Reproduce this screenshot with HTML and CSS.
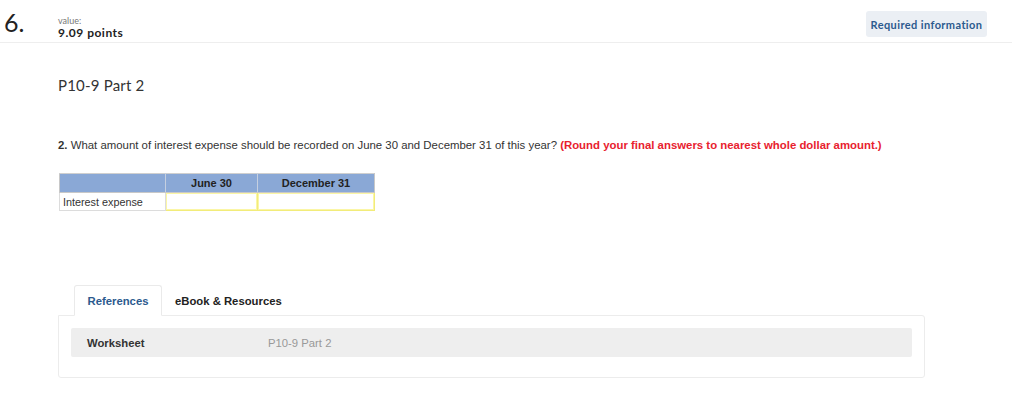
FILE: index.html
```html
<!DOCTYPE html>
<html>
<head>
<meta charset="utf-8">
<link rel="stylesheet" href="styles.css">
</head>
<body>
<div class="header">
  <div class="qnum">6.</div>
  <div class="value">
    <div class="value-label">value:</div>
    <div class="value-points">9.09 points</div>
  </div>
  <div class="req">Required information</div>
</div>
<div class="content">
  <h2 class="title">P10-9 Part 2</h2>
  <p class="question"><b>2.</b> What amount of interest expense should be recorded on June 30 and December 31 of this year? <span class="hint">(Round your final answers to nearest whole dollar amount.)</span></p>
  <table class="grid">
    <tr class="head">
      <th class="c1"></th>
      <th class="c2">June 30</th>
      <th class="c3">December 31</th>
    </tr>
    <tr>
      <td class="label">Interest expense</td>
      <td class="input"></td>
      <td class="input"></td>
    </tr>
  </table>
  <div class="tabs">
    <div class="tab active">References</div>
    <div class="tab">eBook &amp; Resources</div>
  </div>
  <div class="panel">
    <div class="row">
      <span class="row-name">Worksheet</span>
      <span class="row-val">P10-9 Part 2</span>
    </div>
  </div>
</div>
</body>
</html>
```
FILE: styles.css
```css
html, body { margin: 0; padding: 0; background: #fff; }
body { font-family: "Liberation Sans", Arial, sans-serif; color: #333; }

.header {
  width: 1012px;
  height: 42px;
  border-bottom: 1px solid #eeeeee;
  display: flex;
  align-items: flex-start;
  box-sizing: content-box;
}
.qnum {
  font-family: "Lato", "Open Sans", sans-serif;
  font-size: 25px;
  font-weight: 400;
  color: #222;
  margin-left: 4px;
  margin-top: 8px;
  width: 54px;
  line-height: 28px;
}
.value { margin-top: 16px; font-family: "Lato", sans-serif; }
.value-label { font-size: 9px; color: #777; line-height: 10px; }
.value-points { font-size: 12px; font-weight: 700; color: #222; line-height: 14px; letter-spacing: 0.5px; }
.req {
  margin-left: auto;
  margin-top: 11px;
  margin-right: 25px;
  width: 121px;
  height: 26px;
  box-sizing: border-box;
  background: #ebeff4;
  border-radius: 3px;
  color: #2c5a8e;
  font-family: "Lato", sans-serif;
  font-weight: 700;
  font-size: 11px;
  letter-spacing: 0.4px;
  display: flex;
  align-items: center;
  justify-content: center;
}

.content { padding-left: 58px; }
.title {
  margin: 0;
  padding-top: 32px;
  font-family: "Lato", sans-serif;
  font-weight: 400;
  font-size: 15px;
  letter-spacing: 0.2px;
  color: #333;
  line-height: 20px;
}
.question {
  margin: 0;
  margin-top: 43px;
  font-size: 11.4px;
  line-height: 14px;
  color: #333;
}
.hint { color: #e8212e; font-weight: 700; }

.grid {
  margin-top: 21px;
  margin-left: 1px;
  border-collapse: collapse;
  font-size: 11px;
}
.grid th {
  background: #8aa8d6;
  height: 18px;
  padding: 0;
  border: 1px solid #c8c8c8;
  border-top: 1px solid #cfcfcf;
  font-weight: 700;
  color: #222;
  text-align: center;
}
.grid th.c1 { width: 105px; border-right: 1px solid #c5cfe0; }
.grid th.c2 { width: 91px; border-right: 1px solid #c5cfe0; }
.grid th.c3 { width: 116px; }
.grid td {
  height: 17px;
  padding: 0;
  border: 1px solid #dcdcdc;
}
.grid td.label { padding-left: 3px; color: #333; font-size: 10.8px; }
.grid td.input { border: 1px solid #f2ec7a; box-shadow: inset 0 0 0 1px #fbf6a6; }

.tabs {
  display: flex;
  margin-top: 74px;
  margin-left: 16px;
  height: 31px;
}
.tab {
  font-size: 11.3px;
  font-weight: 700;
  color: #222;
  padding: 0 13px;
  display: flex;
  align-items: center;
  box-sizing: border-box;
  height: 31px;
}
.tab.active {
  width: 88px;
  justify-content: center;
  color: #2c5a8e;
  border: 1px solid #eaeaea;
  border-bottom: 1px solid #fff;
  border-radius: 3px 3px 0 0;
  background: #fff;
  position: relative;
  z-index: 1;
}
.panel {
  width: 867px;
  box-sizing: border-box;
  border: 1px solid #ececec;
  border-radius: 0 3px 3px 3px;
  margin-top: -1px;
  padding: 12px 12px 20px 12px;
}
.row {
  background: #eeeeee;
  border-radius: 2px;
  height: 29px;
  display: flex;
  align-items: center;
  font-size: 11.3px;
}
.row-name { font-weight: 700; color: #333; margin-left: 16px; width: 181px; }
.row-val { color: #999; }
```
